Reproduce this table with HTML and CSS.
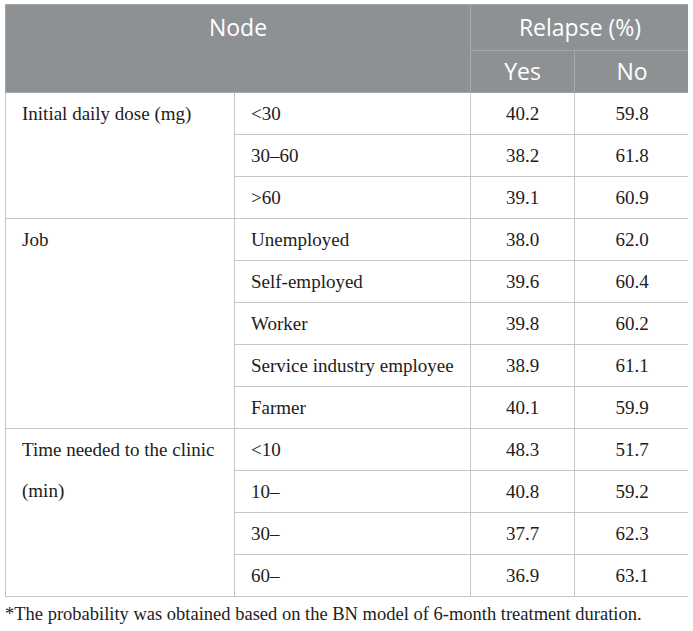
FILE: index.html
```html
<!DOCTYPE html>
<html lang="en">
<head>
  <meta charset="UTF-8">
  <meta name="viewport" content="width=device-width, initial-scale=1.0">
  <title>Relapse probability</title>
  <link rel="stylesheet" href="styles.css">
</head>
<body>
  <table class="data-table">
    <colgroup>
      <col class="col-node">
      <col class="col-level">
      <col class="col-yes">
      <col class="col-no">
    </colgroup>
    <thead>
      <tr>
        <th colspan="2" rowspan="2" class="head-node">Node</th>
        <th colspan="2" class="head-group">Relapse (%)</th>
      </tr>
      <tr>
        <th class="head-sub">Yes</th>
        <th class="head-sub">No</th>
      </tr>
    </thead>
    <tbody>
      <tr>
        <td rowspan="3" class="node">Initial daily dose (mg)</td>
        <td>&lt;30</td>
        <td class="num">40.2</td>
        <td class="num">59.8</td>
      </tr>
      <tr>
        <td>30–60</td>
        <td class="num">38.2</td>
        <td class="num">61.8</td>
      </tr>
      <tr>
        <td>&gt;60</td>
        <td class="num">39.1</td>
        <td class="num">60.9</td>
      </tr>
      <tr>
        <td rowspan="5" class="node">Job</td>
        <td>Unemployed</td>
        <td class="num">38.0</td>
        <td class="num">62.0</td>
      </tr>
      <tr>
        <td>Self-employed</td>
        <td class="num">39.6</td>
        <td class="num">60.4</td>
      </tr>
      <tr>
        <td>Worker</td>
        <td class="num">39.8</td>
        <td class="num">60.2</td>
      </tr>
      <tr>
        <td>Service industry employee</td>
        <td class="num">38.9</td>
        <td class="num">61.1</td>
      </tr>
      <tr>
        <td>Farmer</td>
        <td class="num">40.1</td>
        <td class="num">59.9</td>
      </tr>
      <tr>
        <td rowspan="4" class="node">Time needed to the clinic (min)</td>
        <td>&lt;10</td>
        <td class="num">48.3</td>
        <td class="num">51.7</td>
      </tr>
      <tr>
        <td>10–</td>
        <td class="num">40.8</td>
        <td class="num">59.2</td>
      </tr>
      <tr>
        <td>30–</td>
        <td class="num">37.7</td>
        <td class="num">62.3</td>
      </tr>
      <tr>
        <td>60–</td>
        <td class="num">36.9</td>
        <td class="num">63.1</td>
      </tr>
    </tbody>
  </table>
  <p class="footnote">*The probability was obtained based on the BN model of 6-month treatment duration.</p>
</body>
</html>
```

FILE: styles.css
```css
body {
  margin: 4px 5px;
  padding: 0;
  background-color: #fff;
  font-family: "Liberation Serif", "Times New Roman", serif;
  color: #1e1c1c;
}

.data-table {
  width: 684px;
  border-collapse: collapse;
  table-layout: fixed;
  border-top: 1px solid #c9cfcc;
}

.col-node {
  width: 229px;
}

.col-level {
  width: 236px;
}

.col-yes {
  width: 104px;
}

.col-no {
  width: 115px;
}

th {
  background-color: #8e9194;
  color: #fff;
  font-family: "Open Sans", Lato, sans-serif;
  font-weight: 400;
  font-size: 23px;
  padding: 0;
  border: 1px solid #a6a9ab;
  text-align: center;
}

.head-node {
  vertical-align: top;
  line-height: 45px;
}

.head-group {
  height: 45px;
  line-height: 45px;
}

.head-sub {
  height: 41px;
  line-height: 41px;
}

thead tr:last-child th {
  border-bottom: 1px solid #9b9ea0;
}

td {
  border: 1px solid #c3c5c6;
  padding: 0 16px;
  height: 41px;
  line-height: 41px;
  font-size: 19px;
  vertical-align: top;
}

td.node {
  padding-right: 10px;
}

td.num {
  text-align: center;
  padding: 0;
}

.footnote {
  margin: 6px 0 0;
  font-size: 18.5px;
  line-height: 22px;
}
```
